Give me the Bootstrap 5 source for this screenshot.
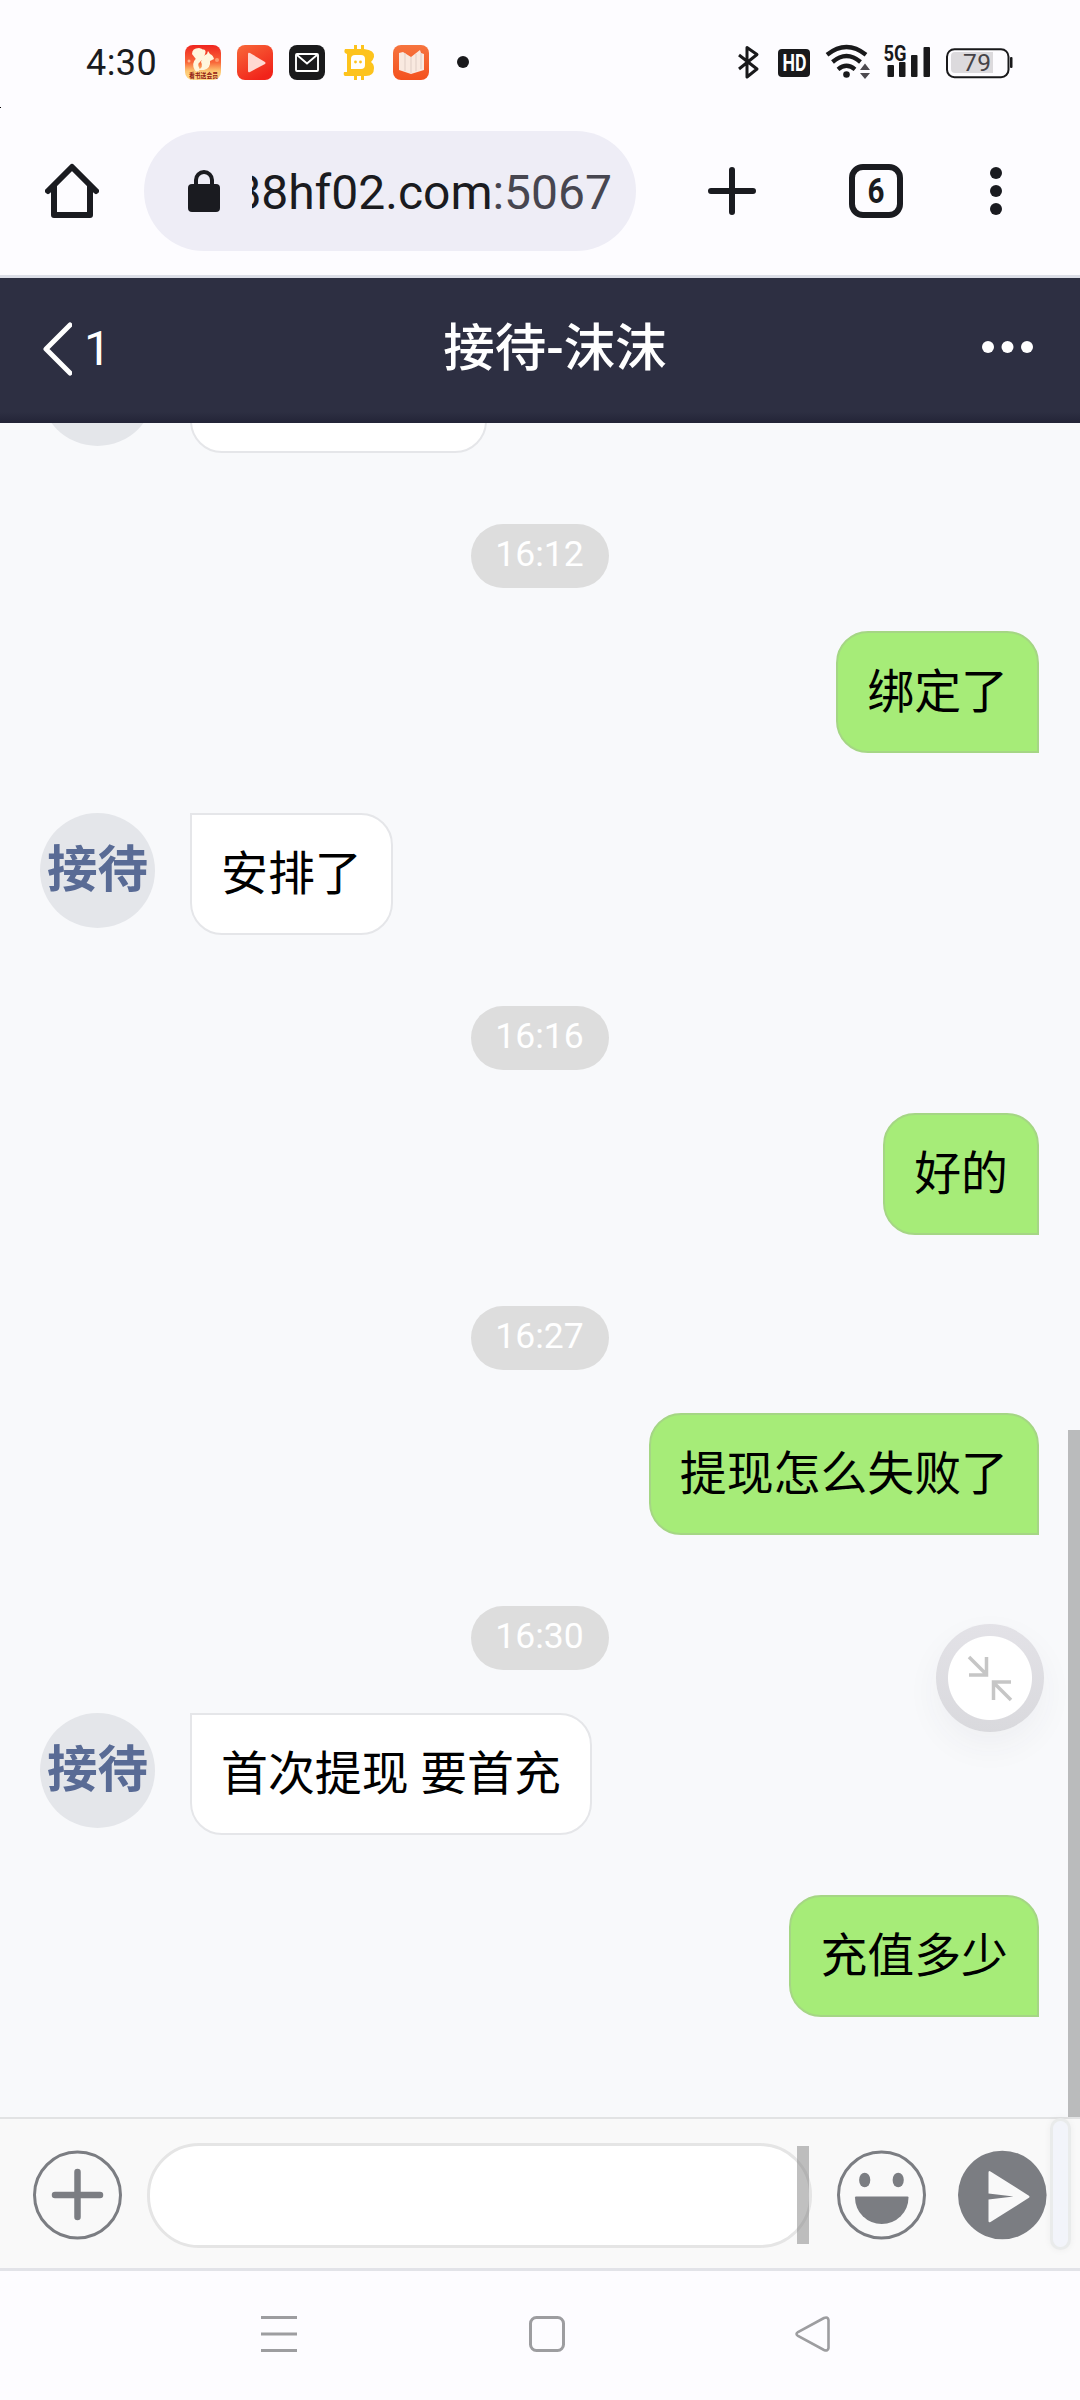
<!DOCTYPE html>
<html lang="zh-CN">
<head>
<meta charset="utf-8">
<meta name="viewport" content="width=device-width, initial-scale=1">
<title>接待-沫沫</title>
<link href="https://cdn.jsdelivr.net/npm/bootstrap@5.3.0/dist/css/bootstrap.min.css" rel="stylesheet">
<style>
body{width:1080px;height:2400px;margin:0;overflow:hidden;background:#fdfcff;color:#1a1b20;font-family:Roboto,"Noto Sans CJK SC",sans-serif}
svg{display:block;flex:none}
.statusbar{height:131px;padding:38px 0 0 86px}
.clock{font-size:36px;line-height:50px;width:99px;letter-spacing:.4px}
.statusicons{left:730px}
.speck{top:107px}
.toolbar{height:144px;padding-left:45px}
.omnibox{margin-left:45px;width:492px;height:120px;border-radius:60px;background:#eeedf6;padding-left:44px}
.url{margin-left:32px;width:360px;height:60px;font-size:48px;line-height:63px;white-space:nowrap}
.url .port{color:#474650}
.chathead{height:148px;padding-bottom:4px;background:linear-gradient(#2d2f42 0,#2d2f42 134px,#232437 145px);border-top:3px solid #dcdee7;color:#fff}
.chathead .count{font-size:48px;line-height:60px;margin-left:12px;width:40px}
.chathead .title{font-size:51.5px;line-height:70px;font-weight:500}
.feed{height:1694px;background:#f8f9fb;position:relative;overflow:hidden;padding:0 41px 0 40px}
.feed-scroll{margin-top:-92px}
.msg{margin-bottom:60.4px;height:122px}
.avatar{width:115px;height:115px;border-radius:50%;background:#e4e6ea;color:#596b95;font-weight:700;font-size:50.5px;line-height:114px;text-align:center;margin-right:35px;white-space:nowrap;flex:none}
.bubble{height:122px;font-size:46.9px;line-height:118px;padding:0 29px;border:2px solid #e5e6e9;border-radius:0 32px 32px 32px;background:#fff;color:#000;white-space:nowrap}
.mine .bubble{background:#a6ec78;border-color:#a5d684;border-radius:32px 32px 0 32px}
.stamp{padding-top:10.4px;margin-bottom:43px}
.stamp span{width:138px;height:64px;border-radius:32px;background:#ddd;color:#fff;font-size:35.5px;line-height:61px;text-align:center}
.scrollthumb{position:absolute;right:0;top:1007px;width:12px;height:687px;background:#babbbc}
.floatbtn{position:absolute;left:936px;top:1201px;width:108px;height:108px;border-radius:50%;padding:12px;background:radial-gradient(circle,#fff 41.5px,transparent 42.5px),linear-gradient(#e3e2e7,#d9d9dd);box-shadow:0 14px 34px rgba(60,60,70,.05)}
.composer{height:154px;background:#f9f9f9;border-top:2px solid #e2e3e4;border-bottom:3px solid #e2e3e8;position:relative;padding:2px 0 0 33px}
.entry{width:665px;height:105px;margin:1px 25px 0;border:3px solid #e5e5e5;border-radius:52px;background:#fff;position:relative}
.entry i{position:absolute;left:647px;top:0;width:12px;height:98px;background:rgba(130,130,130,.5)}
.send{margin-left:32px}
.handle{position:absolute;left:1053px;top:2px;width:15px;height:126px;border-radius:8px;background:#f2f4fa;box-shadow:0 0 0 3px #e9ebeb,0 0 6px 4px rgba(0,0,0,.04)}
.sysnav{height:129px;padding:28px 0 0 261px}
</style>
</head>
<body class="d-flex flex-column">
<header class="statusbar d-flex align-items-start position-relative">
  <div class="clock">4:30</div>
  <svg width="290" height="50" viewBox="185 38 290 50">
    <defs>
      <linearGradient id="sq" x2="0" y2="1"><stop stop-color="#f0251f"/><stop offset=".5" stop-color="#f8683a"/><stop offset=".75" stop-color="#fdc873"/><stop offset="1" stop-color="#ffd98a"/></linearGradient>
      <linearGradient id="pl" x2=".6" y2="1"><stop stop-color="#f8693a"/><stop offset="1" stop-color="#f1231a"/></linearGradient>
      <linearGradient id="bk" x2="0" y2="1"><stop stop-color="#f6743f"/><stop offset="1" stop-color="#f4511e"/></linearGradient>
    </defs>
    <rect x="185" y="45" width="36" height="35" rx="8" fill="url(#sq)"/>
    <path d="M192 54q0-6 7-6 6 1 5 7-1 4-5 8" fill="#fff6dd"/>
    <path d="M203 52q-1 5-5 8-4 4-1 9" fill="none" stroke="#fff6dd" stroke-width="5" stroke-linecap="round"/>
    <path d="M201 62q1-6 6-8l1-3 2 3q3 1 4 5l-4 2q1 7-6 9h-6q6-3 3-8z" fill="#fff6dd"/>
    <circle cx="189" cy="61" r="1.500" fill="#ffb08a"/><circle cx="217" cy="60" r="2" fill="#ff9a70"/>
    <text x="189" y="77.500" font-size="7" font-weight="700" fill="#922014" textLength="29" lengthAdjust="spacingAndGlyphs" font-family="Noto Sans CJK SC">看书送会员</text>
    <rect x="237" y="45" width="36" height="35" rx="8" fill="url(#pl)"/>
    <path d="M248 54v17q0 2 2 1l15-8q1-1 0-2l-15-9q-2-1-2 1z" fill="#ffd9d2"/>
    <rect x="289" y="45" width="36" height="35" rx="8" fill="#1a1a1c"/>
    <g fill="none" stroke="#fff" stroke-width="1.900"><rect x="296" y="54" width="22" height="17" rx="1"/><path d="M297 55l10 8.500 10-8.500"/></g>
    <path d="M345 49h9v-4h3v4h4v-4h3v4q11 1 10 8-1 3-3 5 3 2 3 6 0 8-8 8h-2v4h-3v-4h-4v4h-3v-4h-9q-2-1-1-4h3V54q-4-1-2-5z" fill="#fdc31d"/>
    <path d="M351 69V59q0-4 4-4h6q4 0 4 4v6q0 4-4 4z" fill="#fff"/><circle cx="355.500" cy="62" r="1.400" fill="#fdc31d"/><circle cx="360.500" cy="62" r="1.400" fill="#fdc31d"/>
    <rect x="393" y="45" width="36" height="35" rx="8" fill="url(#bk)"/>
    <path d="M399 53l4-1 8 5 9-7 1 3 3 1v16l-13 4-12-4z" fill="#f9e9e0"/><path d="M411 57v16M405 53v18M416 54v17M421 53v16" stroke="#dfcdc5" stroke-width="1"/>
    <circle cx="463" cy="62" r="6" fill="#19191c"/>
  </svg>
  <svg class="statusicons position-absolute" width="290" height="50" viewBox="730 38 290 50" fill="#19191b">
    <path d="M739 55l18 14-10 8V47.500l10 7-18 14.500" fill="none" stroke="#19191b" stroke-width="3" stroke-linejoin="round"/>
    <rect x="778" y="49" width="32" height="28" rx="4"/><text x="782.500" y="71" font-size="23" font-weight="700" fill="#fff" textLength="24" lengthAdjust="spacingAndGlyphs">HD</text>
    <g fill="none" stroke="#19191b" stroke-width="4.300"><path d="M827 54.800q19.500-15.500 39 0"/><path d="M832.500 62q14-12 28 0"/><path d="M838 69.300q8.500-7 17 0"/></g><circle cx="846.500" cy="74.500" r="3.300"/>
    <path d="M860 70l5-6.500 5 6.500zM860 73h10l-5 6z" fill="#4d4a50"/>
    <text x="883.500" y="60.500" font-size="21.500" font-weight="700" textLength="23" lengthAdjust="spacingAndGlyphs">5G</text>
    <rect x="887.500" y="65" width="6.500" height="12" rx="1"/><rect x="899" y="62" width="6.500" height="15" rx="1"/><rect x="911" y="55" width="6.500" height="22" rx="1"/><rect x="923.500" y="47" width="6.500" height="30" rx="1"/>
    <rect x="947" y="49.200" width="61.500" height="28" rx="7.500" fill="none" stroke="#19191b" stroke-width="2"/><path d="M955 52h38v21h-38q-4 0-4-4V56q0-4 4-4z" fill="#dcdadd"/><rect x="1010" y="57" width="2.500" height="11" rx="1"/>
    <text x="963" y="71" font-size="24.500" fill="#454347" textLength="28">79</text>
  </svg>
  <svg class="speck position-absolute start-0" width="2" height="1"><rect width="1" height="1"/></svg>
</header>
<div class="toolbar d-flex align-items-start">
  <svg width="54" height="120" viewBox="45 131 54 120" fill="none" stroke="#1a1b20" stroke-width="6" stroke-linecap="round" stroke-linejoin="round"><path d="M48 191l24-24 24 24M54 186v29h36v-29"/></svg>
  <div class="omnibox d-flex align-items-center">
    <svg width="32" height="44" viewBox="0 0 32 44"><rect y="15" width="32" height="28" rx="4" fill="#1a1b20"/><path d="M8 17V11a8 8 0 0 1 16 0v6" fill="none" stroke="#1a1b20" stroke-width="4"/></svg>
    <div class="url overflow-hidden d-flex justify-content-end"><span>88hf02.com<span class="port">:5067</span></span></div>
  </div>
  <svg width="444" height="120" viewBox="636 131 444 120" fill="none" stroke="#1a1b20" stroke-width="6" stroke-linecap="round"><path d="M711 191h42M732 170v42"/><rect x="852" y="167" width="48" height="48" rx="11"/><text x="876" y="203" text-anchor="middle" font-size="35" font-weight="700" fill="#1a1b20" stroke="none" textLength="17" lengthAdjust="spacingAndGlyphs">6</text><g fill="#1a1b20" stroke="none"><circle cx="996" cy="173" r="6"/><circle cx="996" cy="191" r="6"/><circle cx="996" cy="209" r="6"/></g></svg>
</div>
<nav class="chathead d-flex align-items-center justify-content-between">
  <div class="d-flex align-items-center" style="width:300px">
    <svg width="72" height="56" viewBox="0 0 72 56" fill="none" stroke="#fff" stroke-width="5" stroke-linecap="round" stroke-linejoin="round"><path d="M70 4L46 28l24 24"/></svg>
    <div class="count">1</div>
  </div>
  <div class="title">接待-沫沫</div>
  <svg width="270" height="60" viewBox="810 316 270 60" fill="#fff"><circle cx="988" cy="344" r="6"/><circle cx="1007.500" cy="344" r="6"/><circle cx="1027" cy="344" r="6"/></svg>
</nav>
<main class="feed">
  <div class="feed-scroll">
    <div class="msg d-flex"><div class="avatar"></div><div class="bubble" style="width:297px"></div></div>
    <div class="stamp d-flex justify-content-center"><span>16:12</span></div>
    <div class="msg mine d-flex justify-content-end"><div class="bubble">绑定了</div></div>
    <div class="msg d-flex"><div class="avatar">接待</div><div class="bubble">安排了</div></div>
    <div class="stamp d-flex justify-content-center"><span>16:16</span></div>
    <div class="msg mine d-flex justify-content-end"><div class="bubble">好的</div></div>
    <div class="stamp d-flex justify-content-center"><span>16:27</span></div>
    <div class="msg mine d-flex justify-content-end"><div class="bubble">提现怎么失败了</div></div>
    <div class="stamp d-flex justify-content-center"><span>16:30</span></div>
    <div class="msg d-flex"><div class="avatar">接待</div><div class="bubble">首次提现 要首充</div></div>
    <div class="msg mine d-flex justify-content-end"><div class="bubble">充值多少</div></div>
  </div>
  <div class="scrollthumb"></div>
  <div class="floatbtn"><svg width="84" height="84" viewBox="948 1636 84 84" fill="none" stroke="#c6c6c6" stroke-width="3.500"><path d="M969 1657l18 18M986.500 1657v18H969M1011 1700l-18-18M993.500 1700v-18H1011"/></svg></div>
</main>
<footer class="composer d-flex align-items-center">
  <svg width="89" height="90" viewBox="33 2150 89 90" fill="none" stroke="#7b7d82"><circle cx="77.500" cy="2195" r="43" stroke-width="3"/><path d="M55 2195h45M77.500 2172v45" stroke-width="6.500" stroke-linecap="round"/></svg>
  <div class="entry"><i></i></div>
  <svg width="89" height="90" viewBox="837 2150 89 90" fill="#7b7d82"><circle cx="881.500" cy="2195" r="43" fill="none" stroke="#7b7d82" stroke-width="3"/><ellipse cx="864.700" cy="2180" rx="5.600" ry="7.300"/><ellipse cx="898.200" cy="2180" rx="5.600" ry="7.300"/><path d="M856 2196.500h51.500q1 0 1 1a26.700 26.500 0 0 1-53.500 0q0-1 1-1z"/></svg>
  <svg class="send" width="89" height="90" viewBox="958 2150 89 90"><circle cx="1002.300" cy="2195" r="44.300" fill="#7b7d82"/><path d="M988.500 2172.500q0-2.500 2-1l38 24q2 1.200 0 2.500l-38 24q-2 1-2-1v-21.500l25-3-25-3z" fill="#f9f9f9"/></svg>
  <div class="handle"></div>
</footer>
<div class="sysnav">
  <svg width="570" height="70" viewBox="261 2199 570 70" fill="none" stroke="#9d9da0" stroke-width="3"><path d="M261 2217.500h36M261 2234h36M261 2250.500h36"/><rect x="530.500" y="2217.500" width="33" height="33" rx="6"/><path d="M824 2218l-26 14q-3 2 0 4l26 14q4 1.500 4.500-2v-28q-.5-3.500-4.500-2z" stroke-width="2.600"/></svg>
</div>
<script src="https://cdn.jsdelivr.net/npm/bootstrap@5.3.0/dist/js/bootstrap.bundle.min.js"></script>
</body>
</html>
